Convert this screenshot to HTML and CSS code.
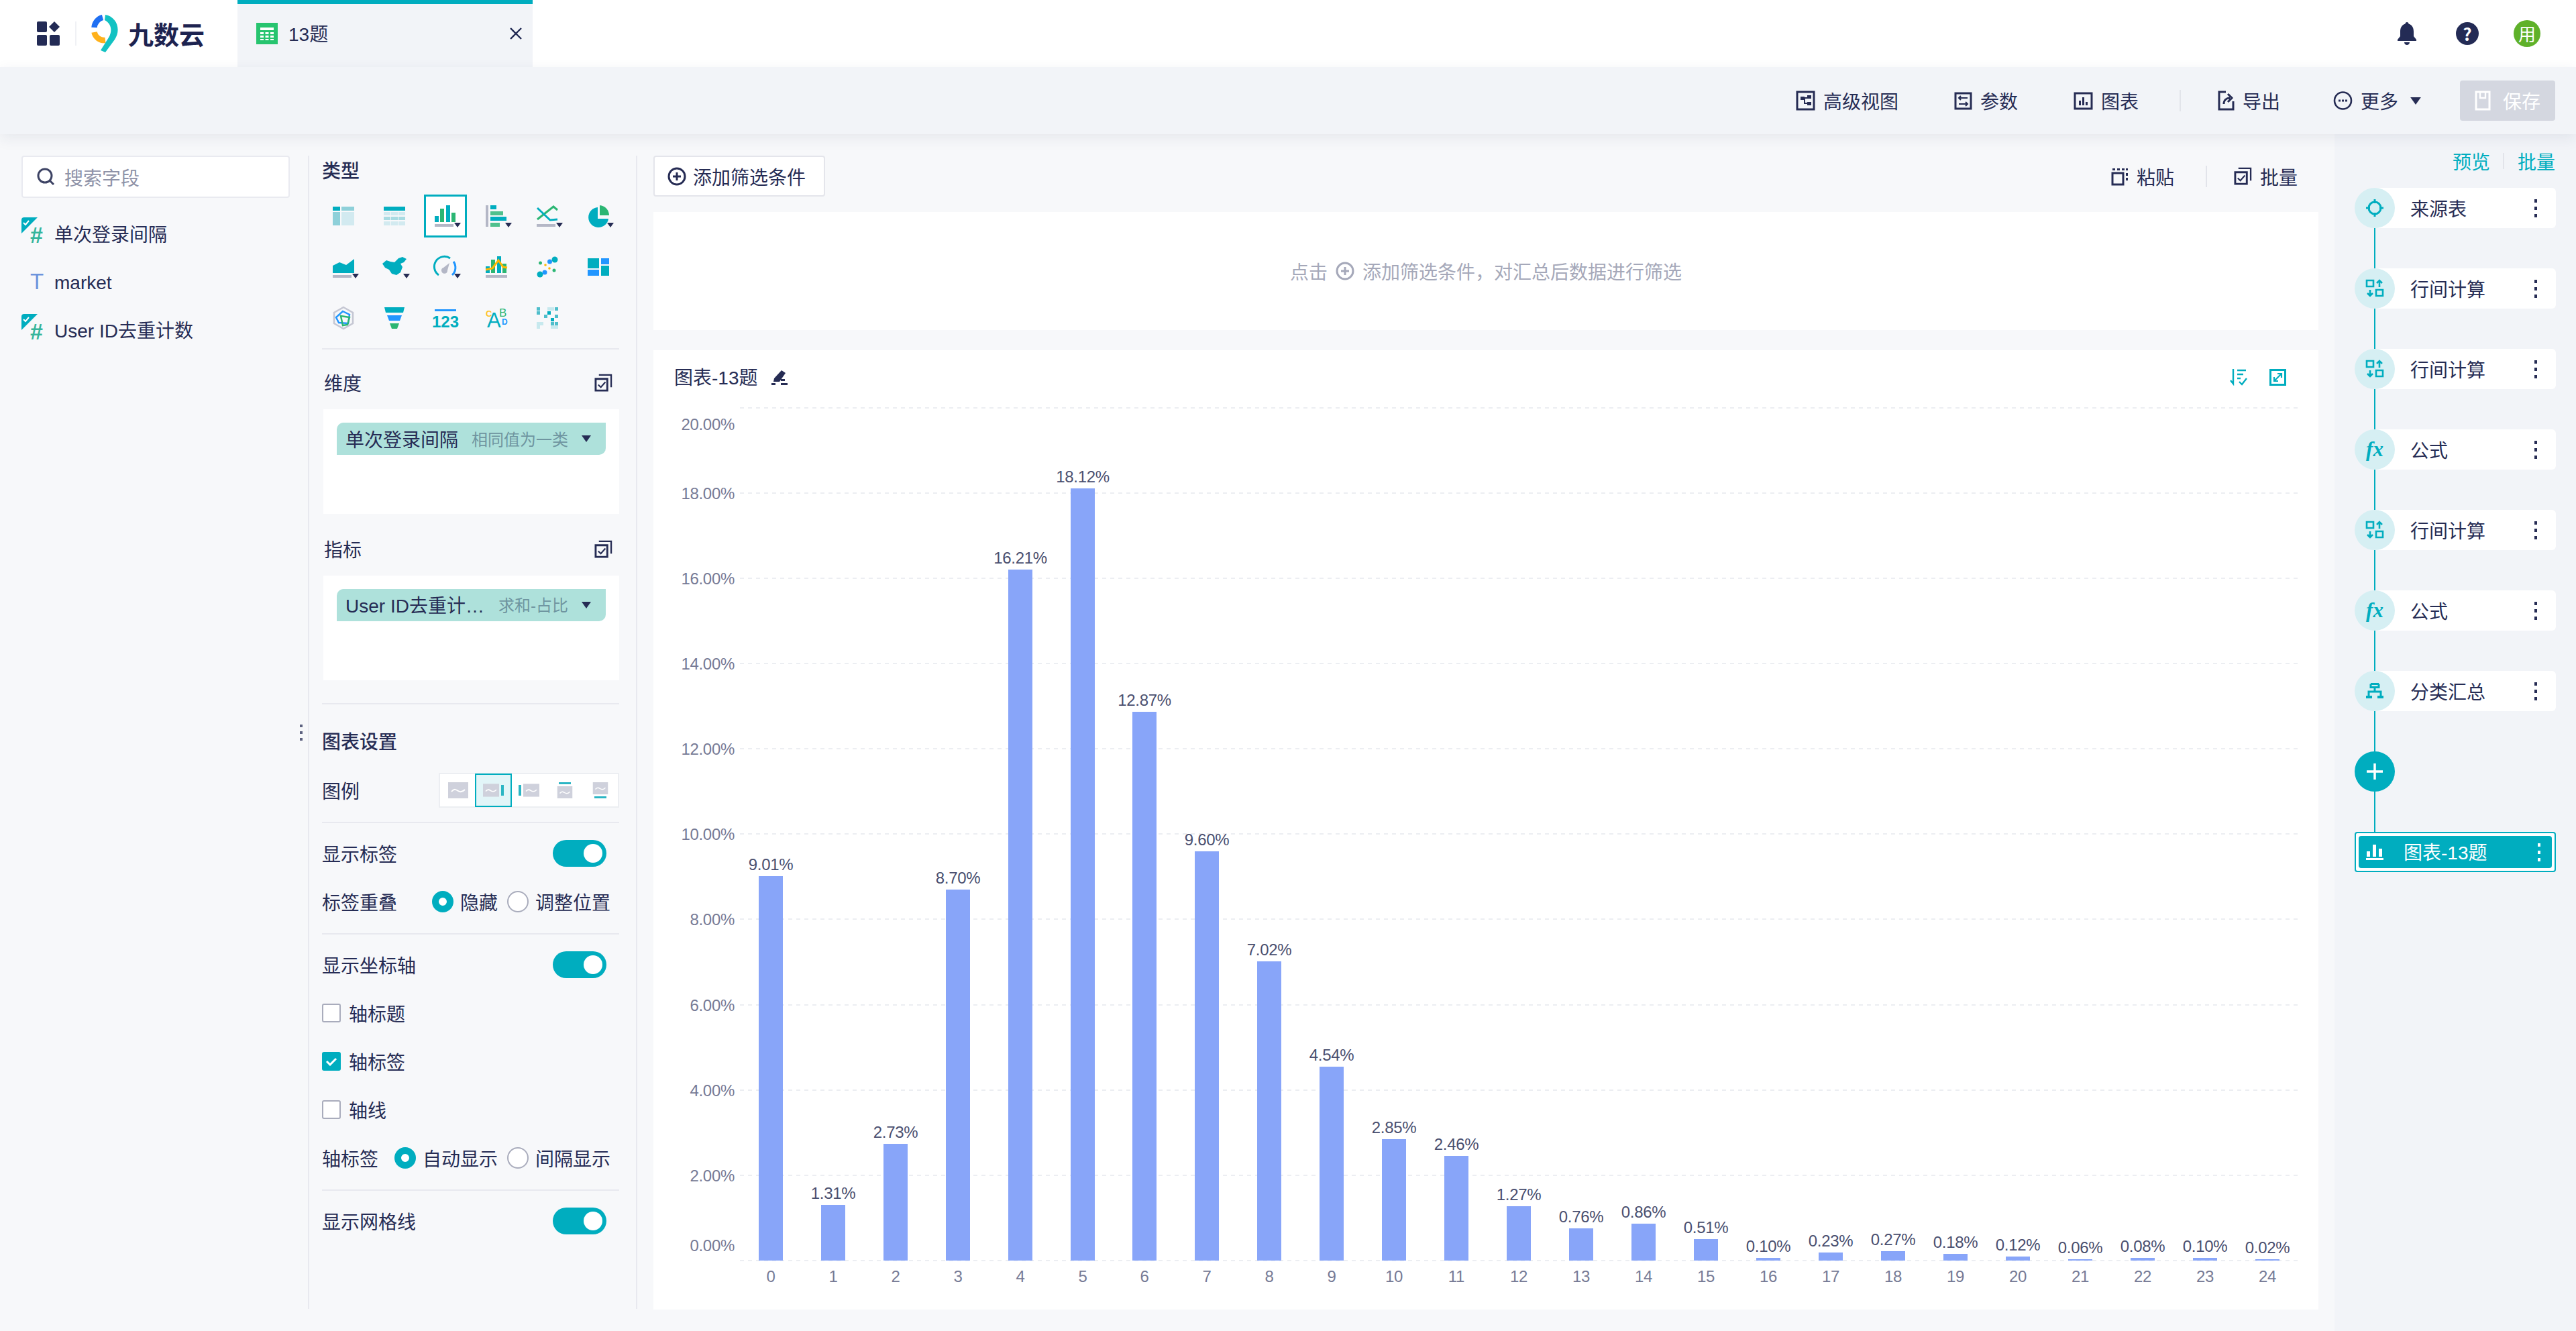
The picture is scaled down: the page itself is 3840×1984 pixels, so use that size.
FILE: index.html
```html
<!DOCTYPE html>
<html lang="zh">
<head>
    <meta charset="UTF-8">
    <title>13题</title>
    <link rel="stylesheet" href="styles.css">
</head>
<body>
<svg class="defs">
    <symbol id="ic-batch" viewBox="0 0 28 28">
        <path d="M2 8h18v18H2z" fill="none" stroke="currentColor" stroke-width="3"/>
        <path d="M7 2h19v19" fill="none" stroke="currentColor" stroke-width="2.4"/>
        <path d="M6 17l4 4 7-8" fill="none" stroke="currentColor" stroke-width="2.2"/>
    </symbol>
    <symbol id="ic-calc" viewBox="0 0 28 28">
        <g fill="none" stroke="#00adbf" stroke-width="2.6">
            <path d="M2 2h10v9H2zM16 16h10v9H16z"/>
            <path d="M21 12V3M17 6l4-4 4 4M7 25v-9M3 21l4 4 4-4"/>
        </g>
    </symbol>
    <symbol id="ic-caret" viewBox="0 0 10 7"><path d="M0 0h10L5 7z" fill="#262c54"/></symbol>
    <symbol id="ic-legend" viewBox="0 0 30 24">
        <rect width="30" height="24" fill="#cfd1dc"/>
        <path d="M5 14c4-5 7-3 10-1s6 2 10-2" fill="none" stroke="#fff" stroke-width="2"/>
    </symbol>
</svg>

<header class="header">
    <div class="brand">
        <svg class="apps" width="35" height="36" viewBox="0 0 35 36">
            <rect x="0" y="0" width="15" height="16" rx="2" fill="#232b55"/>
            <path d="M26 0l8 8-8 8-8-8z" fill="#232b55"/>
            <rect x="0" y="20" width="15" height="16" rx="2" fill="#232b55"/>
            <rect x="19" y="20" width="15" height="16" rx="2" fill="#232b55"/>
        </svg>
        <span class="brand-line"></span>
        <svg class="logo" width="42" height="56" viewBox="0 0 42 56">
            <path d="M4.500 19A17 17 0 0 1 17 4" fill="none" stroke="#1f6ff2" stroke-width="8.500"/>
            <path d="M4.500 26A15 15 0 0 0 21 38" fill="none" stroke="#ffb11b" stroke-width="8.500"/>
            <path d="M21 0c17 3 24 22 14 37L21 56l-7-3 12-19c6-10 4-21-6-26z" fill="#12c2c2"/>
        </svg>
        <span class="brand-name">九数云</span>
    </div>
    <div class="tab">
        <svg class="tab-icon" width="32" height="32" viewBox="0 0 32 32">
            <rect width="32" height="32" fill="#27c46f"/>
            <path d="M6 7h20v4H6zM6 14h5v3H6zM13.500 14h5v3h-5zM21 14h5v3h-5zM6 19h5v3H6zM13.500 19h5v3h-5zM21 19h5v3h-5zM6 24h5v2H6zM13.500 24h5v2h-5zM21 24h5v2h-5z" fill="#fff"/>
        </svg>
        <span class="tab-name"><span class="lt">13</span>题</span>
        <svg class="tab-close" width="18" height="18" viewBox="0 0 18 18"><path d="M1 1l16 16M17 1L1 17" stroke="#232b55" stroke-width="2.400"/></svg>
    </div>
    <div class="header-right">
        <svg width="28" height="34" viewBox="0 0 28 34"><path d="M14 0c1.500 0 2.500 1 2.500 2.500C22 4 24 9 24 14v7l4 5v2H0v-2l4-5v-7c0-5 2-10 7.500-11.500C11.500 1 12.500 0 14 0zM10 30h8c0 2.500-2 4-4 4s-4-1.500-4-4z" fill="#232b55"/></svg>
        <span class="help">?</span>
        <span class="avatar">用</span>
    </div>
</header>

<div class="toolbar">
    <a class="tool">
        <svg width="29" height="30" viewBox="0 0 29 30"><path d="M2 2h25v26H2z" fill="none" stroke="#262c54" stroke-width="3"/><path d="M7 9h6v5H7zM17 7h6v5h-6zM17 17h6v5h-6z" fill="#262c54"/><path d="M13 11h4M13 11v8h4" fill="none" stroke="#262c54" stroke-width="2"/></svg>
        高级视图
    </a>
    <a class="tool tool-next">
        <svg width="27" height="27" viewBox="0 0 27 27"><path d="M2 2h23v23H2z" fill="none" stroke="#262c54" stroke-width="3"/><path d="M7 9h13M10 6L7 9l3 3M20 18H7M17 15l3 3-3 3" fill="none" stroke="#262c54" stroke-width="2"/></svg>
        参数
    </a>
    <a class="tool tool-next">
        <svg width="29" height="27" viewBox="0 0 29 27"><path d="M2 2h25v23H2z" fill="none" stroke="#262c54" stroke-width="3"/><path d="M8 13h3v7H8zM13 8h3v12h-3zM18 15h3v5h-3z" fill="#262c54"/></svg>
        图表
    </a>
    <span class="tool-line"></span>
    <a class="tool tool-export">
        <svg width="25" height="30" viewBox="0 0 25 30"><path d="M12 2H2v26h21V16" fill="none" stroke="#262c54" stroke-width="3"/><path d="M9 20c0-6 4-9 9-9M15 5l6 6-6 6" fill="none" stroke="#262c54" stroke-width="3"/></svg>
        导出
    </a>
    <a class="tool tool-more">
        <svg width="29" height="30" viewBox="0 0 29 30"><circle cx="14.500" cy="15" r="12.500" fill="none" stroke="#262c54" stroke-width="2.600"/><path d="M8 13.500h3v3H8zM13 13.500h3v3h-3zM18 13.500h3v3h-3z" fill="#262c54"/></svg>
        更多
    </a>
    <svg class="tool-caret" width="16" height="11"><use href="#ic-caret"/></svg>
    <button class="save">
        <svg width="24" height="30" viewBox="0 0 24 30"><path d="M2 2h20v26H2z" fill="none" stroke="#fff" stroke-width="3"/><path d="M8 2v9h8V2" fill="none" stroke="#fff" stroke-width="2.400"/></svg>
        保存
    </button>
</div>

<div class="workspace">
    <aside class="fields">
        <div class="search">
            <svg width="27" height="27" viewBox="0 0 27 27"><circle cx="12" cy="12" r="10" fill="none" stroke="#3d4364" stroke-width="3"/><path d="M19 19l6 6" stroke="#3d4364" stroke-width="3"/></svg>
            <span>搜索字段</span>
        </div>
        <ul class="field-list">
            <li class="field">
                <svg class="flag" width="24" height="24" viewBox="0 0 24 24"><path d="M0 4q0-4 4-4h20L0 24z" fill="#00adbf"/><path d="M3 8l3 3 5-6" fill="none" stroke="#fff" stroke-width="2"/></svg>
                <span class="field-num">#</span><span>单次登录间隔</span>
            </li>
            <li class="field"><span class="field-text">T</span><span><span class="lt">market</span></span></li>
            <li class="field">
                <svg class="flag" width="24" height="24" viewBox="0 0 24 24"><path d="M0 4q0-4 4-4h20L0 24z" fill="#00adbf"/><path d="M3 8l3 3 5-6" fill="none" stroke="#fff" stroke-width="2"/></svg>
                <span class="field-num">#</span><span><span class="lt">User ID</span>去重计数</span>
            </li>
        </ul>
    </aside>

    <section class="config">
        <span class="grip"><i></i><i></i><i></i></span>
        <h3 class="config-title">类型</h3>
        <div class="types">
            <div class="type">
                <svg viewBox="0 0 64 64"><rect x="16" y="18" width="11" height="6" fill="#00adbf"/><rect x="29" y="18" width="19" height="6" fill="#8ed0d9"/><rect x="16" y="26" width="11" height="20" fill="#8ed0d9"/><rect x="29" y="26" width="19" height="20" fill="#d2eaf0"/></svg>
            </div>
            <div class="type">
                <svg viewBox="0 0 64 64"><rect x="16" y="18" width="32" height="6" fill="#00adbf"/><path d="M16 26h10v5H16zM27 26h10v5H27zM38 26h10v5H38zM16 40h10v6H16zM27 40h10v6H27zM38 40h10v6H38z" fill="#d2eaf0"/><path d="M16 33h10v5H16zM27 33h10v5H27zM38 33h10v5H38z" fill="#a8dbe2"/></svg>
            </div>
            <div class="type type-on">
                <svg viewBox="0 0 64 64"><rect x="16" y="44" width="28" height="4" fill="#b4b7c6"/><rect x="16" y="32" width="6" height="9" fill="#00adbf"/><rect x="24" y="21" width="6" height="20" fill="#2bb673"/><rect x="33" y="16" width="6" height="25" fill="#00adbf"/><rect x="41" y="27" width="6" height="14" fill="#2bb673"/><path d="M45 42h10l-5 7z" fill="#262c54"/></svg>
            </div>
            <div class="type">
                <svg viewBox="0 0 64 64"><rect x="16" y="16" width="4" height="32" fill="#b4b7c6"/><rect x="23" y="16" width="9" height="6" fill="#00adbf"/><rect x="23" y="25" width="19" height="6" fill="#4fc08d"/><rect x="23" y="33" width="24" height="6" fill="#00adbf"/><rect x="23" y="42" width="14" height="6" fill="#4fc08d"/><path d="M45 42h10l-5 7z" fill="#262c54"/></svg>
            </div>
            <div class="type">
                <svg viewBox="0 0 64 64"><rect x="16" y="44" width="28" height="4" fill="#b4b7c6"/><path d="M17 37L41 18l6 5" fill="none" stroke="#2bb673" stroke-width="3"/><path d="M17 20l19 18 11-1" fill="none" stroke="#00adbf" stroke-width="3"/><path d="M45 42h10l-5 7z" fill="#262c54"/></svg>
            </div>
            <div class="type">
                <svg viewBox="0 0 64 64"><path d="M31 19A15 15 0 1 0 47 36H31z" fill="#00adbf"/><path d="M34 16a15 15 0 0 1 14 15H34z" fill="#2bb673"/><path d="M45 42h10l-5 7z" fill="#262c54"/></svg>
            </div>
            <div class="type">
                <svg viewBox="0 0 64 64"><rect x="16" y="44" width="28" height="4" fill="#b4b7c6"/><path d="M16 30l10-5 10 4 12-9v21H16z" fill="#00adbf"/><path d="M45 42h10l-5 7z" fill="#262c54"/></svg>
            </div>
            <div class="type">
                <svg viewBox="0 0 64 64"><path d="M14 27l6-5 6 2 6 1 6-6 6-2 6 3-4 5-5 2 3 5-3 8-6 4-7-2-4-6-6-3z" fill="#00adbf"/><path d="M45 42h10l-5 7z" fill="#262c54"/></svg>
            </div>
            <div class="type">
                <svg viewBox="0 0 64 64"><path d="M22 44A15 15 0 0 1 39 19" fill="none" stroke="#00adbf" stroke-width="3"/><path d="M44 24a15 15 0 0 1-2 20" fill="none" stroke="#2196ff" stroke-width="3"/><path d="M29 33l9-7-3 11a4.500 4.500 0 1 1-6-4z" fill="#b4b7c6"/><path d="M45 42h10l-5 7z" fill="#262c54"/></svg>
            </div>
            <div class="type">
                <svg viewBox="0 0 64 64"><rect x="16" y="44" width="32" height="4" fill="#b4b7c6"/><rect x="16" y="31" width="6" height="10" fill="#00adbf"/><rect x="24" y="21" width="6" height="20" fill="#2bb673"/><rect x="33" y="16" width="6" height="25" fill="#00adbf"/><rect x="41" y="27" width="6" height="14" fill="#2bb673"/><path d="M16 36l10-2 9-12 7 10 6 1" fill="none" stroke="#ffb800" stroke-width="3"/></svg>
            </div>
            <div class="type">
                <svg viewBox="0 0 64 64"><circle cx="21" cy="43" r="4.500" fill="#00adbf"/><circle cx="28" cy="40" r="3.500" fill="#2196ff"/><circle cx="35.500" cy="24" r="3.500" fill="#2196ff"/><circle cx="43" cy="21" r="4.500" fill="#00adbf"/><circle cx="21.500" cy="26" r="2.500" fill="#2bb673"/><circle cx="29" cy="29" r="1.800" fill="#ffb800"/><circle cx="35" cy="34" r="1.800" fill="#ffb800"/><circle cx="42" cy="37" r="2.500" fill="#2bb673"/></svg>
            </div>
            <div class="type">
                <svg viewBox="0 0 64 64"><rect x="16" y="19" width="17" height="15" fill="#00adbf"/><rect x="36" y="19" width="12" height="9" fill="#2196ff"/><rect x="16" y="36" width="17" height="9" fill="#2196ff"/><rect x="36" y="30" width="12" height="15" fill="#00adbf"/></svg>
            </div>
            <div class="type">
                <svg viewBox="0 0 64 64"><path d="M32 16l14 8v16l-14 8-14-8V24z" fill="none" stroke="#c5c7d3" stroke-width="2.500"/><path d="M31 22l10 5-2 13-14-1-4-8z" fill="none" stroke="#2196ff" stroke-width="2.500"/><path d="M28 29l13 2-3 11-7 1z" fill="none" stroke="#2bb673" stroke-width="2.500"/></svg>
            </div>
            <div class="type">
                <svg viewBox="0 0 64 64"><path d="M17 16h30l-2 8H19z" fill="#00adbf"/><path d="M21 28h22l-3 8H24z" fill="#2196ff"/><path d="M25 40h14l-3 8h-8z" fill="#2bb673"/></svg>
            </div>
            <div class="type">
                <svg viewBox="0 0 64 64"><rect x="16" y="19" width="32" height="3" fill="#2196ff"/><text class="type-num" x="32" y="46">123</text></svg>
            </div>
            <div class="type">
                <svg viewBox="0 0 64 64"><text class="type-c" x="16" y="30">C</text><text class="type-a" x="18" y="46">A</text><text class="type-b" x="36" y="30">B</text><text class="type-d" x="40" y="42">D</text></svg>
            </div>
            <div class="type">
                <svg viewBox="0 0 64 64"><path d="M16 16h5v5h-5zM16 22h5v5h-5zM43 16h5v5h-5zM27 27h5v5h-5zM43 27h5v5h-5zM37 38h5v5h-5zM43 38h5v5h-5z" fill="#4fbecb"/><path d="M32 16h5v5h-5zM37 16h5v5h-5zM32 22h5v5h-5zM16 38h5v5h-5zM21 38h5v5h-5zM16 43h5v5h-5zM37 43h11v5H37z" fill="#c7e9ee"/><path d="M37 22h-5v5h5zM37 32h5v5h-5z" fill="#00adbf"/></svg>
            </div>
        </div>
        <hr class="divider divider-types">

        <div class="well-head">维度<svg width="27" height="27"><use href="#ic-batch"/></svg></div>
        <div class="well">
            <div class="pill"><span class="pill-name">单次登录间隔</span><span class="pill-sub">相同值为一类</span><svg width="14" height="10"><use href="#ic-caret"/></svg></div>
        </div>
        <div class="well-head well-head-next">指标<svg width="27" height="27"><use href="#ic-batch"/></svg></div>
        <div class="well">
            <div class="pill"><span class="pill-name"><span class="lt">User ID</span>去重计<span class="lt">…</span></span><span class="pill-sub">求和<span class="lt">-</span>占比</span><svg width="14" height="10"><use href="#ic-caret"/></svg></div>
        </div>
        <hr class="divider divider-well">

        <h3 class="config-title settings-title">图表设置</h3>
        <div class="row row-legend">
            图例
            <div class="legend-seg">
                <span class="seg"><svg width="30" height="24"><use href="#ic-legend"/></svg></span>
                <span class="seg seg-on"><svg width="24" height="24"><use href="#ic-legend"/></svg><i class="mark-v"></i></span>
                <span class="seg"><i class="mark-v"></i><svg width="24" height="24"><use href="#ic-legend"/></svg></span>
                <span class="seg seg-col"><i class="mark-h"></i><svg width="30" height="18" preserveAspectRatio="none"><use href="#ic-legend"/></svg></span>
                <span class="seg seg-col"><svg width="30" height="18" preserveAspectRatio="none"><use href="#ic-legend"/></svg><i class="mark-h"></i></span>
            </div>
        </div>
        <hr class="divider divider-legend">
        <div class="row row-first">显示标签<span class="toggle"><i></i></span></div>
        <div class="row">
            标签重叠
            <div class="radios"><span class="radio radio-on"><i></i>隐藏</span><span class="radio"><i></i>调整位置</span></div>
        </div>
        <hr class="divider">
        <div class="row row-first">显示坐标轴<span class="toggle"><i></i></span></div>
        <div class="row"><span class="check"></span>轴标题</div>
        <div class="row"><span class="check check-on"><svg width="18" height="14" viewBox="0 0 18 14"><path d="M2 7l5 5 9-9" fill="none" stroke="#fff" stroke-width="3"/></svg></span>轴标签</div>
        <div class="row"><span class="check"></span>轴线</div>
        <div class="row">
            轴标签
            <div class="radios"><span class="radio radio-on"><i></i>自动显示</span><span class="radio"><i></i>间隔显示</span></div>
        </div>
        <hr class="divider">
        <div class="row row-first">显示网格线<span class="toggle"><i></i></span></div>
    </section>

    <main class="main">
        <div class="filter-bar">
            <button class="add-filter">
                <svg width="28" height="28" viewBox="0 0 28 28"><circle cx="14" cy="14" r="12" fill="none" stroke="#262c54" stroke-width="3"/><path d="M14 8v12M8 14h12" stroke="#262c54" stroke-width="3"/></svg>
                添加筛选条件
            </button>
            <div class="filter-tools">
                <a class="tool">
                    <svg width="26" height="28" viewBox="0 0 26 28"><path d="M2 9h16v17H2z" fill="none" stroke="#262c54" stroke-width="3"/><path d="M2 2h4v3H2zM9 2h4v3H9zM16 2h4v3h-4zM22 2h3v3h-3zM22 9h3v4h-3zM22 16h3v4h-3z" fill="#262c54"/></svg>
                    粘贴
                </a>
                <span class="tool-line"></span>
                <a class="tool"><svg width="27" height="27"><use href="#ic-batch"/></svg>批量</a>
            </div>
        </div>
        <div class="filter-panel">
            点击
            <svg width="28" height="28" viewBox="0 0 28 28"><circle cx="14" cy="14" r="12" fill="none" stroke="#a5a8b9" stroke-width="3"/><path d="M14 8v12M8 14h12" stroke="#a5a8b9" stroke-width="3"/></svg>
            添加筛选条件，对汇总后数据进行筛选
        </div>
        <div class="chart-card">
            <div class="chart-head">
                <span>图表<span class="lt">-13</span>题</span>
                <svg class="edit" width="24" height="24" viewBox="0 0 24 24"><path d="M15 2l6 4-9 13H3l1-5z" fill="#262c54"/><path d="M14 21h10v3H14zM0 21h6v3H0zM14 15h6v3h-6z" fill="#262c54"/></svg>
                <span class="chart-tools">
                    <svg width="26" height="26" viewBox="0 0 26 26"><path d="M5 1v22M1 18l4 5V1" fill="none" stroke="#00adbf" stroke-width="2.400"/><path d="M11 3h13M11 9h9M11 15h5" stroke="#00adbf" stroke-width="2.400"/><path d="M14 20l4 4 7-9" fill="none" stroke="#00adbf" stroke-width="2.400"/></svg>
                    <svg width="25" height="25" viewBox="0 0 25 25"><path d="M1.500 1.500h22v22h-22z" fill="none" stroke="#00adbf" stroke-width="3"/><path d="M7 18L18 7M12 7h6v6M7 12v6h6" fill="none" stroke="#00adbf" stroke-width="2.200"/></svg>
                </span>
            </div>
            <svg class="chart" width="2482" height="1350" viewBox="974 602 2482 1350">
                <g class="grid">
                    <path d="M1103 608H3426M1103 735H3426M1103 862H3426M1103 989H3426M1103 1116H3426M1103 1243H3426M1103 1370H3426M1103 1498H3426M1103 1625H3426M1103 1752H3426M1103 1879H3426"/>
                </g>
                <g class="y-label">
                    <text x="1095" y="641">20.00%</text>
                    <text x="1095" y="744">18.00%</text>
                    <text x="1095" y="871">16.00%</text>
                    <text x="1095" y="998">14.00%</text>
                    <text x="1095" y="1125">12.00%</text>
                    <text x="1095" y="1252">10.00%</text>
                    <text x="1095" y="1379">8.00%</text>
                    <text x="1095" y="1507">6.00%</text>
                    <text x="1095" y="1634">4.00%</text>
                    <text x="1095" y="1761">2.00%</text>
                    <text x="1095" y="1865">0.00%</text>
                </g>
                <g class="bars">
                    <rect x="1131" y="1306" width="36" height="573"/>
                    <rect x="1224" y="1796" width="36" height="83"/>
                    <rect x="1317" y="1705" width="36" height="174"/>
                    <rect x="1410" y="1326" width="36" height="553"/>
                    <rect x="1503" y="849" width="36" height="1030"/>
                    <rect x="1596" y="728" width="36" height="1151"/>
                    <rect x="1688" y="1061" width="36" height="818"/>
                    <rect x="1781" y="1269" width="36" height="610"/>
                    <rect x="1874" y="1433" width="36" height="446"/>
                    <rect x="1967" y="1590" width="36" height="289"/>
                    <rect x="2060" y="1698" width="36" height="181"/>
                    <rect x="2153" y="1723" width="36" height="156"/>
                    <rect x="2246" y="1798" width="36" height="81"/>
                    <rect x="2339" y="1831" width="36" height="48"/>
                    <rect x="2432" y="1824" width="36" height="55"/>
                    <rect x="2525" y="1847" width="36" height="32"/>
                    <rect x="2618" y="1875" width="36" height="4"/>
                    <rect x="2711" y="1867" width="36" height="12"/>
                    <rect x="2804" y="1865" width="36" height="14"/>
                    <rect x="2897" y="1869" width="36" height="10"/>
                    <rect x="2990" y="1873" width="36" height="6"/>
                    <rect x="3083" y="1877" width="36" height="2"/>
                    <rect x="3176" y="1875" width="36" height="4"/>
                    <rect x="3269" y="1875" width="36" height="4"/>
                    <rect x="3362" y="1877" width="36" height="2"/>
                </g>
                <g class="bar-label">
                    <text x="1149" y="1297">9.01%</text>
                    <text x="1242" y="1787">1.31%</text>
                    <text x="1335" y="1696">2.73%</text>
                    <text x="1428" y="1317">8.70%</text>
                    <text x="1521" y="840">16.21%</text>
                    <text x="1614" y="719">18.12%</text>
                    <text x="1706" y="1052">12.87%</text>
                    <text x="1799" y="1260">9.60%</text>
                    <text x="1892" y="1424">7.02%</text>
                    <text x="1985" y="1581">4.54%</text>
                    <text x="2078" y="1689">2.85%</text>
                    <text x="2171" y="1714">2.46%</text>
                    <text x="2264" y="1789">1.27%</text>
                    <text x="2357" y="1822">0.76%</text>
                    <text x="2450" y="1815">0.86%</text>
                    <text x="2543" y="1838">0.51%</text>
                    <text x="2636" y="1866">0.10%</text>
                    <text x="2729" y="1858">0.23%</text>
                    <text x="2822" y="1856">0.27%</text>
                    <text x="2915" y="1860">0.18%</text>
                    <text x="3008" y="1864">0.12%</text>
                    <text x="3101" y="1868">0.06%</text>
                    <text x="3194" y="1866">0.08%</text>
                    <text x="3287" y="1866">0.10%</text>
                    <text x="3380" y="1868">0.02%</text>
                </g>
                <g class="x-label">
                    <text x="1149" y="1911">0</text>
                    <text x="1242" y="1911">1</text>
                    <text x="1335" y="1911">2</text>
                    <text x="1428" y="1911">3</text>
                    <text x="1521" y="1911">4</text>
                    <text x="1614" y="1911">5</text>
                    <text x="1706" y="1911">6</text>
                    <text x="1799" y="1911">7</text>
                    <text x="1892" y="1911">8</text>
                    <text x="1985" y="1911">9</text>
                    <text x="2078" y="1911">10</text>
                    <text x="2171" y="1911">11</text>
                    <text x="2264" y="1911">12</text>
                    <text x="2357" y="1911">13</text>
                    <text x="2450" y="1911">14</text>
                    <text x="2543" y="1911">15</text>
                    <text x="2636" y="1911">16</text>
                    <text x="2729" y="1911">17</text>
                    <text x="2822" y="1911">18</text>
                    <text x="2915" y="1911">19</text>
                    <text x="3008" y="1911">20</text>
                    <text x="3101" y="1911">21</text>
                    <text x="3194" y="1911">22</text>
                    <text x="3287" y="1911">23</text>
                    <text x="3380" y="1911">24</text>
                </g>
            </svg>
        </div>
    </main>

    <aside class="flow">
        <div class="flow-head"><a>预览</a><span></span><a>批量</a></div>
        <div class="flow-list">
            <div class="node">
                <span class="node-icon">
                    <svg width="28" height="28" viewBox="0 0 28 28"><circle cx="14" cy="14" r="9" fill="none" stroke="#00adbf" stroke-width="3"/><path d="M14 1v6M14 21v6M1 14h6M21 14h6" stroke="#00adbf" stroke-width="3"/></svg>
                </span>
                <div class="node-body">来源表<span class="dots"><i></i><i></i><i></i></span></div>
            </div>
            <span class="link"></span>
            <div class="node">
                <span class="node-icon"><svg width="28" height="28"><use href="#ic-calc"/></svg></span>
                <div class="node-body">行间计算<span class="dots"><i></i><i></i><i></i></span></div>
            </div>
            <span class="link"></span>
            <div class="node">
                <span class="node-icon"><svg width="28" height="28"><use href="#ic-calc"/></svg></span>
                <div class="node-body">行间计算<span class="dots"><i></i><i></i><i></i></span></div>
            </div>
            <span class="link"></span>
            <div class="node">
                <span class="node-icon node-fx">fx</span>
                <div class="node-body">公式<span class="dots"><i></i><i></i><i></i></span></div>
            </div>
            <span class="link"></span>
            <div class="node">
                <span class="node-icon"><svg width="28" height="28"><use href="#ic-calc"/></svg></span>
                <div class="node-body">行间计算<span class="dots"><i></i><i></i><i></i></span></div>
            </div>
            <span class="link"></span>
            <div class="node">
                <span class="node-icon node-fx">fx</span>
                <div class="node-body">公式<span class="dots"><i></i><i></i><i></i></span></div>
            </div>
            <span class="link"></span>
            <div class="node">
                <span class="node-icon">
                    <svg width="28" height="24" viewBox="0 0 28 24"><path d="M8 1.500h12M8 1.500v5h12v-5M14 6v7M5 19v-6h18v6" fill="none" stroke="#00adbf" stroke-width="3"/><path d="M1 19h9v4H1zM18 19h9v4h-9z" fill="#00adbf"/></svg>
                </span>
                <div class="node-body">分类汇总<span class="dots"><i></i><i></i><i></i></span></div>
            </div>
            <span class="link"></span>
            <span class="add-node">
                <svg width="24" height="24" viewBox="0 0 24 24"><path d="M12 0v24M0 12h24" stroke="#fff" stroke-width="3.500"/></svg>
            </span>
            <span class="link"></span>
            <div class="chart-node">
                <div class="chart-node-inner">
                    <svg width="26" height="24" viewBox="0 0 26 24"><path d="M0 21h26v3H0zM1 11h5v8H1zM10 1h5v18h-5zM19 7h5v12h-5z" fill="#fff"/></svg>
                    <span class="chart-node-name">图表<span class="lt">-13</span>题</span>
                    <span class="dots"><i></i><i></i><i></i></span>
                </div>
            </div>
        </div>
    </aside>
</div>
</body>
</html>
```

FILE: styles.css
```css
*{
    margin:0;
    padding:0;
    box-sizing:border-box;
}
html,body{
    width:3840px;
    height:1984px;
    overflow:hidden;
}
body{
    background:#f7f8fa;
    color:#262c54;
    font-family:"Noto Sans CJK SC",sans-serif;
    font-size:28px;
    line-height:40px;
}
ul{
    list-style:none;
}
svg{
    display:block;
    flex:none;
}
svg text{
    font-family:"Liberation Sans",sans-serif;
}
.defs{
    display:none;
}
/* latin runs inside chinese labels */
.lt{
    font-family:"Liberation Sans",sans-serif;
}

/* top bar */
.header{
    height:100px;
    background:#fff;
    display:flex;
}
.brand{
    width:354px;
    padding-left:55px;
    display:flex;
    align-items:center;
}
.brand-line{
    width:2px;
    height:36px;
    margin-left:22px;
    background:#f0f1f5;
}
.logo{
    margin-left:22px;
}
.brand-name{
    margin-left:13px;
    font-size:38px;
    font-weight:700;
    color:#1d2350;
}
.tab{
    width:440px;
    background:#f2f4f8;
    border-top:6px solid #00adbf;
    padding:0 16px 6px 28px;
    display:flex;
    align-items:center;
}
.tab-name{
    margin-left:16px;
}
.tab-close{
    margin-left:auto;
}
.header-right{
    margin-left:auto;
    padding-right:53px;
    display:flex;
    align-items:center;
}
.help{
    width:34px;
    height:34px;
    margin-left:59px;
    border-radius:50%;
    background:#232b55;
    color:#fff;
    font-size:26px;
    font-weight:700;
    line-height:34px;
    text-align:center;
}
.avatar{
    width:40px;
    height:40px;
    margin-left:52px;
    border-radius:50%;
    background:#5fb12a;
    color:#fff;
    font-size:26px;
    line-height:40px;
    text-align:center;
}

/* toolbar */
.toolbar{
    height:100px;
    background:#f2f4f8;
    padding-right:31px;
    display:flex;
    align-items:center;
    justify-content:flex-end;
    position:relative;
    z-index:2;
    box-shadow:0 6px 20px rgba(40,50,90,.08);
}
.tool{
    display:flex;
    align-items:center;
    gap:12px;
}
.tool-next{
    margin-left:83px;
}
.tool-export{
    margin-left:55px;
}
.tool-more{
    margin-left:79px;
}
.tool-line{
    width:2px;
    height:32px;
    margin-left:61px;
    background:#e2e4ea;
}
.tool-caret{
    margin-left:18px;
}
.save{
    width:142px;
    height:60px;
    margin-left:58px;
    border:none;
    border-radius:4px;
    background:#d4d7e0;
    color:#fff;
    font:inherit;
    display:flex;
    align-items:center;
    justify-content:center;
    gap:18px;
}

.workspace{
    height:1784px;
    display:flex;
}

/* field list */
.fields{
    width:459px;
    padding:32px 27px 0 32px;
}
.search{
    height:63px;
    padding-left:21px;
    background:#fff;
    border:2px solid #e9eaf0;
    border-radius:4px;
    color:#8f93a8;
    display:flex;
    align-items:center;
    gap:14px;
}
.field-list{
    margin-top:17px;
}
.field{
    height:72px;
    display:flex;
    align-items:center;
    position:relative;
}
.flag{
    position:absolute;
    left:0;
    top:12px;
}
.field-num,
.field-text{
    width:49px;
    padding-left:13px;
    font-family:"Liberation Sans",sans-serif;
    line-height:40px;
}
.field-num{
    color:#36b59b;
    font-size:34px;
    font-weight:700;
    position:relative;
    top:2px;
}
.field-text{
    color:#6d94dc;
    font-size:33px;
}

/* config column */
.config{
    width:491px;
    height:1719px;
    margin-top:32px;
    padding:0 25px 0 19px;
    border-left:2px solid #e8e9ef;
    border-right:2px solid #e8e9ef;
    position:relative;
}
.grip{
    position:absolute;
    left:-14px;
    top:848px;
    display:flex;
    flex-direction:column;
    gap:6px;
}
.grip i{
    width:4px;
    height:4px;
    background:#5d6280;
}
.config-title{
    height:42px;
    font-size:28px;
    font-weight:500;
    line-height:42px;
}
.types{
    margin-top:16px;
    display:grid;
    grid-template-columns:repeat(6,64px);
    grid-auto-rows:64px;
    gap:12px;
}
.type-on{
    background:#fff;
    border:3px solid #00adbf;
}
.type-on svg{
    margin:-3px;
    width:64px;
    height:64px;
}
.type-num{
    font-size:24px;
    font-weight:700;
    fill:#00adbf;
    text-anchor:middle;
}
.type-a{
    font-size:31px;
    fill:#00adbf;
}
.type-b{
    font-size:17px;
    fill:#2bb673;
}
.type-c{
    font-size:13px;
    font-weight:700;
    fill:#ffc21f;
}
.type-d{
    font-size:12px;
    font-weight:700;
    fill:#2196ff;
}
.divider{
    height:2px;
    margin-top:27px;
    border:none;
    background:#e8e9ef;
}
.divider-types{
    margin-top:13px;
}
.well-head{
    height:40px;
    margin-top:29px;
    padding:0 10px 0 3px;
    display:flex;
    align-items:center;
    justify-content:space-between;
}
.well-head-next{
    margin-top:32px;
}
.well{
    height:156px;
    margin:20px 0 0 2px;
    padding:20px;
    background:#fff;
}
.pill{
    height:48px;
    padding:0 22px 0 13px;
    background:#aee1db;
    border-radius:10px 0 10px 0;
    display:flex;
    align-items:center;
}
.pill-name{
    white-space:nowrap;
}
.pill-sub{
    margin-left:auto;
    margin-right:20px;
    color:#6f95a0;
    font-size:24px;
}
.divider-well{
    margin-top:34px;
}
.settings-title{
    margin-top:34px;
    height:40px;
    line-height:40px;
}
.row{
    height:40px;
    margin-top:32px;
    display:flex;
    align-items:center;
}
.row-legend{
    height:52px;
    margin-top:28px;
}
.divider-legend{
    margin-top:21px;
}
.row-first{
    margin-top:25px;
}
.legend-seg{
    margin-left:auto;
    height:52px;
    display:flex;
    background:#fff;
    border:2px solid #eceef2;
}
.seg{
    width:53px;
    display:flex;
    align-items:center;
    justify-content:center;
    gap:3px;
}
.seg-col{
    flex-direction:column;
}
.seg-on{
    background:#e2f5f8;
    outline:2px solid #00adbf;
    outline-offset:-1px;
}
.mark-v{
    width:4px;
    height:16px;
    background:#2bb5c4;
}
.mark-h{
    width:18px;
    height:3px;
    background:#2bb5c4;
}
.toggle{
    width:80px;
    height:40px;
    margin-left:auto;
    margin-right:19px;
    padding:0 6px;
    border-radius:20px;
    background:#00adbf;
    display:flex;
    align-items:center;
    justify-content:flex-end;
}
.toggle i{
    width:28px;
    height:28px;
    border-radius:50%;
    background:#fff;
}
.radios{
    margin-left:auto;
    margin-right:13px;
    display:flex;
    gap:14px;
}
.radio{
    display:flex;
    align-items:center;
    gap:10px;
}
.radio i{
    width:32px;
    height:32px;
    border:2px solid #a9acbc;
    border-radius:50%;
    background:#fff;
}
.radio-on i{
    border:10px solid #00adbf;
}
.check{
    width:28px;
    height:28px;
    margin-right:12px;
    border:2px solid #a9acbc;
    border-radius:3px;
    background:#fff;
}
.check-on{
    border:none;
    background:#00adbf;
    display:flex;
    align-items:center;
    justify-content:center;
}

/* middle */
.main{
    flex:1;
    padding:32px 24px;
    display:flex;
    flex-direction:column;
}
.filter-bar{
    height:61px;
    display:flex;
    align-items:center;
    justify-content:space-between;
}
.add-filter{
    width:256px;
    height:61px;
    padding-left:19px;
    background:#fff;
    border:2px solid #e4e5eb;
    border-radius:4px;
    color:inherit;
    font:inherit;
    display:flex;
    align-items:center;
    gap:10px;
}
.filter-tools{
    padding-right:31px;
    display:flex;
    align-items:center;
}
.filter-tools .tool-line{
    margin:0 40px 0 47px;
}
.filter-panel{
    height:176px;
    margin-top:23px;
    background:#fff;
    color:#a5a8b9;
    display:flex;
    align-items:center;
    justify-content:center;
    gap:12px;
}
.chart-card{
    flex:1;
    margin-top:30px;
    background:#fff;
    min-height:0;
}
.chart-head{
    height:80px;
    padding:0 48px 0 31px;
    display:flex;
    align-items:center;
}
.edit{
    margin-left:20px;
}
.chart-tools{
    margin-left:auto;
    display:flex;
    align-items:center;
    gap:33px;
}
.grid path{
    fill:none;
    stroke:#eceef2;
    stroke-width:2;
    stroke-dasharray:6 6;
}
.bars rect{
    fill:#88a5f9;
}
.y-label text,
.x-label text,
.bar-label text{
    font-size:24px;
    letter-spacing:-.3px;
}
.y-label text{
    fill:#767a95;
    text-anchor:end;
}
.x-label text{
    fill:#767a95;
    text-anchor:middle;
}
.bar-label text{
    fill:#4a4f6f;
    text-anchor:middle;
}

/* flow */
.flow{
    width:360px;
    background:#f2f4f8;
    padding-top:20px;
}
.flow-head{
    height:40px;
    padding-right:31px;
    color:#00adbf;
    display:flex;
    align-items:center;
    justify-content:flex-end;
}
.flow-head span{
    width:2px;
    height:24px;
    margin:0 20px 0 19px;
    background:#e2e4ea;
}
.flow-list{
    margin-top:20px;
    padding-left:30px;
    display:flex;
    flex-direction:column;
    align-items:flex-start;
}
.node{
    width:300px;
    height:60px;
    display:flex;
}
.node-icon{
    width:60px;
    height:60px;
    border-radius:50%;
    background:#d6eff3;
    position:relative;
    flex:none;
    display:flex;
    align-items:center;
    justify-content:center;
}
.node-fx{
    color:#00adbf;
    font-family:"Liberation Serif",serif;
    font-size:31px;
    font-style:italic;
    font-weight:700;
}
.node-body{
    flex:1;
    margin-left:-30px;
    padding:0 28px 0 53px;
    background:#fff;
    border-radius:0 6px 6px 0;
    display:flex;
    align-items:center;
    justify-content:space-between;
}
.dots{
    display:flex;
    flex-direction:column;
    gap:6px;
}
.dots i{
    width:4px;
    height:5px;
    background:#262c54;
}
.link{
    width:2px;
    height:60px;
    margin-left:29px;
    background:#00adbf;
}
.add-node{
    width:60px;
    height:60px;
    border-radius:50%;
    background:#00adbf;
    display:flex;
    align-items:center;
    justify-content:center;
}
.chart-node{
    width:300px;
    height:60px;
    padding:4px;
    background:#fff;
    border:2px solid #00adbf;
    border-radius:4px;
}
.chart-node-inner{
    height:100%;
    padding:0 17px 0 11px;
    background:#00adbf;
    border-radius:4px;
    color:#fff;
    display:flex;
    align-items:center;
}
.chart-node-name{
    margin-left:30px;
}
.chart-node-inner .dots{
    margin-left:auto;
}
.chart-node-inner .dots i{
    background:#fff;
}
```
